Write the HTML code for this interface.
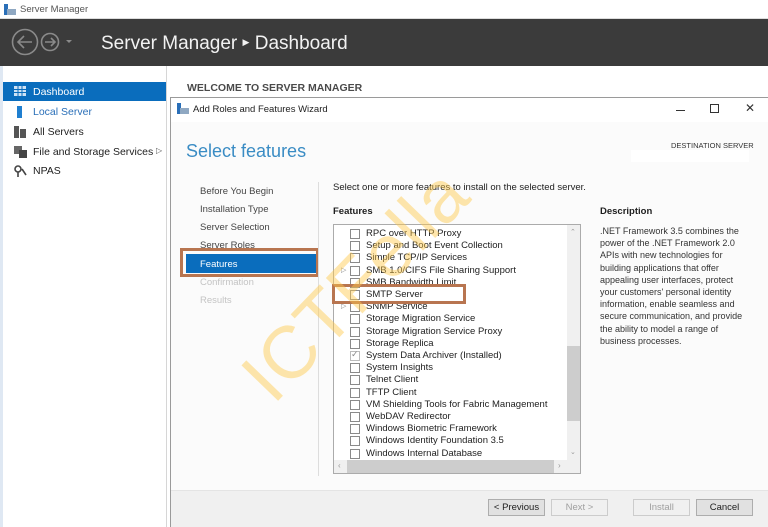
<!DOCTYPE html>
<html><head><meta charset="utf-8"><style>
*{margin:0;padding:0;box-sizing:border-box}
body{width:768px;height:527px;overflow:hidden;position:relative;background:#fff;font-family:"Liberation Sans",sans-serif;color:#1e1e1e}
.a{position:absolute;white-space:nowrap}
.s{font-size:9.5px}
.cb{position:absolute;width:10px;height:10px;border:1px solid #8a8a8a;background:#fff}
.btn{position:absolute;height:17px;border:1px solid #adadad;background:#e1e1e1;font-size:9.5px;text-align:center;line-height:15px}
</style></head><body>
<div class="a" style="left:0;top:0;width:768px;height:19px;background:#fff;border-bottom:1px solid #ddd"></div>
<svg class="a" style="left:4px;top:4px" width="12" height="11"><rect x="0" y="0" width="4" height="11" fill="#2a6fb8"/><rect x="3" y="5" width="9" height="6" fill="#8fa8c2"/></svg>
<div class="a s" style="left:20px;top:4px;color:#555">Server Manager</div>
<div class="a" style="left:0;top:19px;width:768px;height:47px;background:#3b3b3b"></div>
<svg class="a" style="left:10px;top:27px" width="66" height="32" fill="none" stroke="#8a8a8a" stroke-width="1.6"><circle cx="15" cy="15" r="12.5"/><path d="M22 15H9M14 9l-6 6 6 6"/><circle cx="40" cy="15" r="8.5"/><path d="M35 15h9M41 11l4 4-4 4"/><path d="M56 13h6l-3 3z" fill="#8a8a8a" stroke="none"/></svg>
<div class="a" style="left:101px;top:33px;font-size:19px;color:#f2f2f2">Server Manager <span style="font-size:9px;vertical-align:4px">&#9654;</span> Dashboard</div>
<div class="a" style="left:0;top:66px;width:3px;height:461px;background:#dfe8f3"></div>
<div class="a" style="left:166px;top:66px;width:1px;height:461px;background:#d6d6d6"></div>
<div class="a" style="left:3px;top:82px;width:163px;height:19px;background:#0a6dbd"></div>
<svg class="a" style="left:14px;top:86px" width="12" height="10"><rect width="12" height="10" fill="#cfe2f5"/><path d="M0 3.5h12M0 6.5h12M4 0v10M8 0v10" stroke="#0a6dbd"/></svg>
<div class="a" style="left:33px;top:86px;font-size:10.5px;color:#fff">Dashboard</div>
<div class="a" style="left:17px;top:106px;width:5px;height:12px;background:#1f7fd0"></div>
<div class="a" style="left:33px;top:106px;font-size:10.5px;color:#2a6fb8">Local Server</div>
<svg class="a" style="left:14px;top:126px" width="12" height="12" fill="#555"><rect x="0" y="0" width="5" height="12"/><rect x="6" y="3" width="6" height="9"/></svg>
<div class="a" style="left:33px;top:126px;font-size:10.5px">All Servers</div>
<svg class="a" style="left:14px;top:146px" width="13" height="12" fill="#666"><rect x="0" y="0" width="8" height="8"/><rect x="5" y="4" width="8" height="8" fill="#444"/></svg>
<div class="a" style="left:33px;top:146px;font-size:10.5px">File and Storage Services</div>
<div class="a" style="left:156px;top:146px;font-size:8px;color:#555">&#9655;</div>
<svg class="a" style="left:14px;top:165px" width="13" height="12" fill="none" stroke="#444" stroke-width="1.6"><circle cx="4" cy="4" r="3"/><path d="M4 7v5M8 4l4 6"/></svg>
<div class="a" style="left:33px;top:165px;font-size:10.5px">NPAS</div>
<div class="a" style="left:187px;top:82px;font-size:10.5px;font-weight:bold;color:#4a4a4a">WELCOME TO SERVER MANAGER</div>
<div class="a" style="left:170px;top:97px;width:598px;height:430px;background:#fbfbfb;border:1px solid #9a9a9a;border-right:none;border-bottom:none"></div>
<div class="a" style="left:171px;top:98px;width:597px;height:24px;background:#fff"></div>
<svg class="a" style="left:177px;top:103px" width="12" height="11"><rect x="0" y="0" width="4" height="11" fill="#2a6fb8"/><rect x="3" y="5" width="9" height="6" fill="#8fa8c2"/></svg>
<div class="a s" style="left:193px;top:104px">Add Roles and Features Wizard</div>
<div class="a" style="left:676px;top:110px;width:9px;height:1px;background:#333"></div>
<div class="a" style="left:710px;top:104px;width:9px;height:9px;border:1px solid #333"></div>
<div class="a" style="left:745px;top:101px;font-size:12px;color:#333">&#x2715;</div>
<div class="a" style="left:186px;top:141px;font-size:18px;color:#3a8cc4">Select features</div>
<div class="a" style="left:671px;top:141px;font-size:7.5px;color:#333">DESTINATION SERVER</div>
<div class="a" style="left:631px;top:150px;width:118px;height:12px;background:#fff"></div>
<div class="a s" style="left:200px;top:186px;color:#444">Before You Begin</div>
<div class="a s" style="left:200px;top:204px;color:#444">Installation Type</div>
<div class="a s" style="left:200px;top:222px;color:#444">Server Selection</div>
<div class="a s" style="left:200px;top:240px;color:#444">Server Roles</div>
<div class="a" style="left:186px;top:254px;width:130px;height:19px;background:#0a6dbd"></div>
<div class="a s" style="left:200px;top:259px;color:#fff">Features</div>
<div class="a s" style="left:200px;top:277px;color:#c4c4c4">Confirmation</div>
<div class="a s" style="left:200px;top:295px;color:#c4c4c4">Results</div>
<div class="a" style="left:180px;top:248px;width:139px;height:29px;border:3px solid #b87550"></div>
<div class="a" style="left:318px;top:182px;width:1px;height:294px;background:#ddd"></div>
<div class="a s" style="left:333px;top:182px">Select one or more features to install on the selected server.</div>
<div class="a s" style="left:333px;top:206px;font-weight:bold">Features</div>
<div class="a" style="left:333px;top:224px;width:248px;height:250px;background:#fff;border:1px solid #ababab;overflow:hidden">
<div class="a" style="left:233px;top:0;width:13px;height:235px;background:#f0f0f0"></div>
<div class="a" style="left:233px;top:121px;width:13px;height:75px;background:#cdcdcd"></div>
<div class="a" style="left:236px;top:3px;font-size:7px;color:#999">&#8963;</div>
<div class="a" style="left:236px;top:223px;font-size:7px;color:#999">&#8964;</div>
<div class="a" style="left:0;top:235px;width:246px;height:13px;background:#f0f0f0"></div>
<div class="a" style="left:13px;top:235px;width:207px;height:13px;background:#cdcdcd"></div>
<div class="a" style="left:4px;top:236px;font-size:8px;color:#999">&lsaquo;</div>
<div class="a" style="left:224px;top:236px;font-size:8px;color:#999">&rsaquo;</div>
</div>
<div id="rows"></div>
<div class="a" style="left:332px;top:284px;width:134px;height:20px;border:3px solid #b87550"></div>
<div class="a s" style="left:600px;top:206px;font-weight:bold">Description</div>
<div class="a" style="left:600px;top:225px;font-size:9px;line-height:12.2px;white-space:normal;width:150px;color:#333">.NET Framework 3.5 combines the power of the .NET Framework 2.0 APIs with new technologies for building applications that offer appealing user interfaces, protect your customers' personal identity information, enable seamless and secure communication, and provide the ability to model a range of business processes.</div>
<div class="a" style="left:171px;top:490px;width:597px;height:37px;background:#f0f0f0;border-top:1px solid #e4e4e4"></div>
<div class="btn" style="left:488px;top:499px;width:57px">&lt; Previous</div>
<div class="btn" style="left:551px;top:499px;width:57px;background:#f0f0f0;border-color:#ccc;color:#a0a0a0">Next &gt;</div>
<div class="btn" style="left:633px;top:499px;width:57px;background:#f0f0f0;border-color:#ccc;color:#a0a0a0">Install</div>
<div class="btn" style="left:696px;top:499px;width:57px">Cancel</div>
<div class="a" style="left:282px;top:340px;font-size:74px;color:#ffc94a;opacity:.45;transform:rotate(-46deg);transform-origin:0 100%;line-height:1;letter-spacing:1px">ICTFella</div>
<script>
var items=["RPC over HTTP Proxy","Setup and Boot Event Collection","Simple TCP/IP Services","SMB 1.0/CIFS File Sharing Support","SMB Bandwidth Limit","SMTP Server","SNMP Service","Storage Migration Service","Storage Migration Service Proxy","Storage Replica","System Data Archiver (Installed)","System Insights","Telnet Client","TFTP Client","VM Shielding Tools for Fabric Management","WebDAV Redirector","Windows Biometric Framework","Windows Identity Foundation 3.5","Windows Internal Database"];
var h="";
items.forEach(function(t,i){var y=229+i*12.2;
h+='<div class="cb" style="left:350px;top:'+y+'px'+(i==10?';border-color:#bbb':'')+'">'+(i==10?'<span style="position:absolute;left:0;top:-3px;font-size:9px;color:#888">&#10003;</span>':'')+'</div>';
h+='<div class="a s" style="left:366px;top:'+(y-1)+'px">'+t+'</div>';
if(i==3||i==6)h+='<div class="a" style="left:341px;top:'+(y)+'px;font-size:7px;color:#888">&#9655;</div>';});
document.getElementById("rows").innerHTML=h;
</script>
</body></html>
